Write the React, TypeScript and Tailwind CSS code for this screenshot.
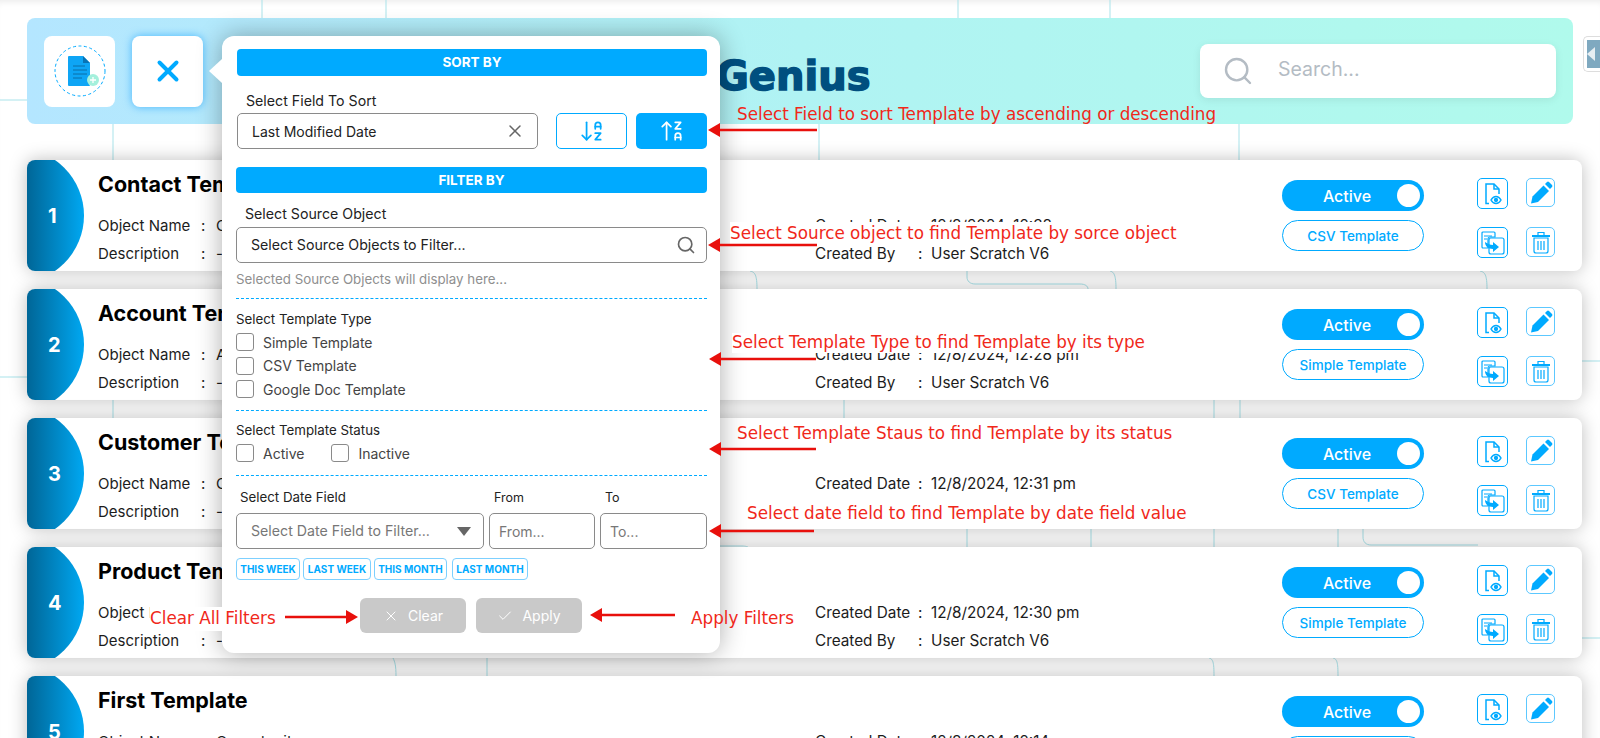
import { ArrowDownAZ, ArrowUpZA, Check, Search, X } from "lucide-react";

const rows = [
  { no: 1, title: "Contact Template", object: "Contact", date: "12/8/2024, 12:38 pm", type: "CSV Template" },
  { no: 2, title: "Account Template", object: "Account", date: "12/8/2024, 12:28 pm", type: "Simple Template" },
  { no: 3, title: "Customer Template", object: "Customer", date: "12/8/2024, 12:31 pm", type: "CSV Template" },
  { no: 4, title: "Product Template", object: "Product", date: "12/8/2024, 12:30 pm", type: "Simple Template" },
  { no: 5, title: "First Template", object: "Opportunity", date: "12/8/2024, 12:14 pm", type: "CSV Template" },
];

const BackgroundLines = () => (
  <svg className="absolute inset-0 h-full w-full" viewBox="0 0 1600 738" fill="none" stroke="#a9e3ea" strokeWidth="1">
    <path d="M262 0V18M386 0V18M958 0V18M1110 0V18" />
    <path d="M0 100H27M113 124V160M819 124V160M1239 124V160" />
    <path d="M750 271c5 1 7 4 7 18M967 271v6c0 4 3 7 8 7h105c5 0 8 2 8 5M1110 271c4 1 6 4 6 18M1480 271c5 1 7 4 7 18" />
    <path d="M0 377H27M1582 361H1600" />
    <path d="M113 400V418M844 400V418M1214 400V418M1240 400V418" />
    <path d="M720 546H742c4 0 6 1 6 1M967 529V547M1091 529V547M1214 529V547M1338 529V547M1363 529v8c0 5 3 8 8 8h107" />
    <path d="M1582 638H1600" />
    <path d="M393 658c2 4 3 8 3 18M487 658V676M1209 658c4 1 5 4 5 18M1333 658c4 1 5 4 5 18" />
  </svg>
);

const AddIcon = () => (
  <svg width="54" height="54" viewBox="0 0 54 54" fill="none">
    <circle cx="27" cy="27" r="25" stroke="#00aaff" strokeWidth="1" strokeDasharray="3 2.500" />
    <path d="M16 12h14l7 7v22a1 1 0 0 1-1 1H16a1 1 0 0 1-1-1V13a1 1 0 0 1 1-1z" fill="#0ea5f5" />
    <path d="M30 12l7 7h-7z" fill="#0873b4" />
    <path d="M20 22h12M20 26h14M20 30h14M20 34h9" stroke="#0b6ea8" strokeWidth="1" />
    <circle cx="40" cy="36" r="6" fill="#a4f0dc" />
    <path d="M40 33v6M37 36h6" stroke="#fff" strokeWidth="1.300" />
  </svg>
);

const ViewIcon = () => (
  <svg width="24" height="24" viewBox="0 0 24 24" fill="none" stroke="#00aaff" strokeWidth="1.500">
    <path d="M8 21.500H5V2h8l5 5v5" />
    <path d="M13 2v5h5" />
    <path d="M10 18c1.500-2.700 3-3.600 5-3.600s3.500 .9 5 3.600c-1.500 2.700-3 3.600-5 3.600s-3.500-.9-5-3.600z" />
    <circle cx="15" cy="18" r="1.400" fill="#00aaff" />
  </svg>
);

const EditIcon = () => (
  <svg width="24" height="24" viewBox="0 0 24 24" fill="#00aaff">
    <path d="M2 22.500l1.500-7L14.500 4.500l5.500 5.500L9 21z" />
    <path d="M16 3l2-2a1.500 1.500 0 0 1 2 0l3 3a1.500 1.500 0 0 1 0 2l-2 2z" />
  </svg>
);

const CopyIcon = () => (
  <svg width="26" height="26" viewBox="0 0 26 26" fill="none" stroke="#00aaff" strokeWidth="1.200">
    <path d="M3 2h11a1 1 0 0 1 1 1v4H10a2 2 0 0 0-2 2v9H3a1 1 0 0 1-1-1V3a1 1 0 0 1 1-1z" />
    <rect x="9" y="8" width="15" height="16" rx="2" />
    <path d="M4 6h8M4 9h3" />
    <path d="M5 12c0 4 3 7 8 7v3l6-5-6-5v3c-3 0-5-1-8-3z" fill="#00aaff" stroke="none" />
  </svg>
);

const TrashIcon = () => (
  <svg width="22" height="24" viewBox="0 0 22 24" fill="none" stroke="#00aaff" strokeWidth="1.200">
    <path d="M2 6h18" strokeWidth="2" />
    <path d="M8 5V2.500h6V5" />
    <path d="M4 8v13a2 2 0 0 0 2 2h10a2 2 0 0 0 2-2V8z" />
    <path d="M8 11v9M11 11v9M14 11v9" />
  </svg>
);

const Annotation = ({ text, className }: { text: string; className: string }) => (
  <span className={"absolute z-30 flex items-center whitespace-nowrap text-[#f0281a] text-[16.800px] font-['DejaVu_Sans',sans-serif] " + className}>
    {text}
  </span>
);

const Arrow = ({ x1, x2, y }: { x1: number; x2: number; y: number }) => {
  const dir = x2 > x1 ? -1 : 1;
  return (
    <g>
      <path d={`M${x1} ${y}H${x2 + dir * 8}`} stroke="#e8100c" strokeWidth="2.500" />
      <path d={`M${x2} ${y}l${dir * 12}-7v14z`} fill="#e8100c" />
    </g>
  );
};

const TemplateRow = ({ row }: { row: (typeof rows)[number] }) => (
  <div className="relative flex h-[111px] w-[1555px] shrink-0 rounded-lg bg-white shadow-[0_0_18px_rgba(0,0,0,0.26)]">
    <div className="flex h-full w-[57px] shrink-0 items-center rounded-l-lg bg-gradient-to-r from-[#006697] to-[#00a8f2] pl-[21px] text-[20px] font-bold text-white [clip-path:circle(67.6px_at_-10.6px_55.5px)]">
      {row.no}
    </div>
    <div className="ml-[14px] w-[717px] pt-[9px] text-[15px] text-[#1c1c1c]">
      <div className="text-[21.500px] leading-[30px] font-bold text-black">{row.title}</div>
      <div className="mt-[13px] flex h-[28px] items-center">
        <span className="w-[103px]">Object Name</span>
        <span className="w-[15px]">:</span>
        <span>{row.object}</span>
      </div>
      <div className="flex h-[28px] items-center">
        <span className="w-[103px]">Description</span>
        <span className="w-[15px]">:</span>
        <span>--</span>
      </div>
    </div>
    <div className="pt-[52px] text-[15.300px] text-[#1c1c1c]">
      <div className="flex h-[28px] items-center">
        <span className="w-[103px]">Created Date</span>
        <span className="w-[13px]">:</span>
        <span>{row.date}</span>
      </div>
      <div className="flex h-[28px] items-center">
        <span className="w-[103px]">Created By</span>
        <span className="w-[13px]">:</span>
        <span>User Scratch V6</span>
      </div>
    </div>
    <div className="absolute right-[158px] top-[20px] flex w-[142px] flex-col gap-[9px]">
      <div className="relative flex h-[31px] items-center justify-center rounded-full bg-[#00aaff] pr-[12px] text-[16px] font-medium text-white">
        Active
        <span className="absolute right-[4px] top-[4px] h-[23px] w-[23px] rounded-full bg-white" />
      </div>
      <div className="flex h-[31px] items-center justify-center rounded-full border border-[#00aaff] pt-[1px] text-[13.500px] font-medium text-[#00aaff]">
        {row.type}
      </div>
    </div>
    <div className="absolute right-[27px] top-[18px] grid grid-cols-[31px_29px] gap-x-[18px] gap-y-[18px]">
      <div className="flex h-[31px] w-[31px] items-center justify-center rounded-[5px] border border-[#00aaff]">
        <ViewIcon />
      </div>
      <div className="flex h-[29px] w-[29px] items-center justify-center rounded-[5px] border border-[#5cc8ff]">
        <EditIcon />
      </div>
      <div className="flex h-[31px] w-[31px] items-center justify-center rounded-[5px] border border-[#00aaff]">
        <CopyIcon />
      </div>
      <div className="flex h-[30px] w-[29px] items-center justify-center rounded-[5px] border border-[#5cc8ff]">
        <TrashIcon />
      </div>
    </div>
  </div>
);

const Checkbox = ({ label }: { label: string }) => (
  <label className="flex h-[18px] items-center gap-[9px] text-[14px] text-[#444]">
    <span className="h-[18px] w-[18px] rounded-[3px] border border-[#8a8a8a] bg-white" />
    {label}
  </label>
);

const FilterPopover = () => (
  <div className="absolute left-[222px] top-[36px] z-20 h-[617px] w-[498px] rounded-xl bg-white pl-[14px] pr-[13px] pt-[13px] text-[14.200px] text-[#222] shadow-[0_0_26px_rgba(0,0,0,0.32)]">
    <span className="absolute -left-[13px] top-[23px] h-0 w-0 border-y-[12px] border-r-[13px] border-y-transparent border-r-white" />
    <div className="ml-[1px] flex h-[27px] items-center justify-center rounded-[4px] bg-[#00aaff] text-[13.500px] font-bold text-white">
      SORT BY
    </div>
    <div className="ml-[10px] mt-[15px] leading-[20px]">Select Field To Sort</div>
    <div className="ml-[1px] mt-[2px] flex gap-[18px]">
      <div className="flex h-[36px] w-[301px] items-center justify-between rounded-[5px] border border-[#8a8a8a] pl-[14px] pr-[12px] text-[14px]">
        Last Modified Date
        <X size={20} color="#666" strokeWidth={1.8} />
      </div>
      <div className="flex h-[36px] w-[71px] items-center justify-center rounded-[5px] border border-[#00aaff]">
        <ArrowDownAZ size={26} color="#00aaff" strokeWidth={1.6} />
      </div>
      <div className="-ml-[9px] flex h-[36px] w-[71px] items-center justify-center rounded-[5px] bg-[#00aaff]">
        <ArrowUpZA size={26} color="#fff" strokeWidth={1.6} />
      </div>
    </div>
    <div className="mt-[18px] flex h-[26px] items-center justify-center rounded-[4px] bg-[#00aaff] text-[13.500px] font-bold text-white">
      FILTER BY
    </div>
    <div className="ml-[9px] mt-[11px] leading-[20px]">Select Source Object</div>
    <div className="mt-[3px] flex h-[36px] items-center justify-between rounded-[5px] border border-[#8a8a8a] pl-[14px] pr-[10px]">
      <span>Select Source Objects to Filter...</span>
      <Search size={20} color="#666" strokeWidth={2} />
    </div>
    <div className="mt-[7px] text-[13.300px] leading-[18px] text-[#8f8f8f]">Selected Source Objects will display here...</div>
    <div className="mt-[10px] border-t border-dashed border-[#00aaff]" />
    <div className="mt-[11px] text-[13.300px] leading-[18px]">Select Template Type</div>
    <div className="mt-[5px] flex flex-col gap-[5.500px]">
      <Checkbox label="Simple Template" />
      <Checkbox label="CSV Template" />
      <Checkbox label="Google Doc Template" />
    </div>
    <div className="mt-[12px] border-t border-dashed border-[#00aaff]" />
    <div className="mt-[10px] text-[13.300px] leading-[18px]">Select Template Status</div>
    <div className="mt-[5px] flex gap-[27px]">
      <Checkbox label="Active" />
      <Checkbox label="Inactive" />
    </div>
    <div className="mt-[13px] border-t border-dashed border-[#00aaff]" />
    <div className="mt-[13px] flex h-[18px] items-center text-[13.300px]">
      <span className="ml-[4px] w-[254px]">Select Date Field</span>
      <span className="w-[111px] text-[12.500px]">From</span>
      <span className="text-[12.500px]">To</span>
    </div>
    <div className="mt-[6px] flex gap-[5px] text-[#777]">
      <div className="flex h-[36px] w-[248px] items-center justify-between rounded-[5px] border border-[#8a8a8a] pl-[14px] pr-[12px]">
        <span>Select Date Field to Filter...</span>
        <span className="h-0 w-0 border-x-[7px] border-t-[9px] border-x-transparent border-t-[#666]" />
      </div>
      <div className="flex h-[36px] w-[106px] items-center rounded-[5px] border border-[#8a8a8a] pl-[9px] text-[14px]">From...</div>
      <div className="flex h-[36px] w-[107px] items-center rounded-[5px] border border-[#8a8a8a] pl-[9px] text-[14px]">To...</div>
    </div>
    <div className="mt-[9px] flex gap-[3px] text-[10px] font-bold text-[#00aaff]">
      <span className="flex h-[22px] w-[64px] items-center justify-center rounded-[4px] border border-[#7dd0ff]">THIS WEEK</span>
      <span className="flex h-[22px] w-[68px] items-center justify-center rounded-[4px] border border-[#7dd0ff]">LAST WEEK</span>
      <span className="flex h-[22px] w-[73px] items-center justify-center rounded-[4px] border border-[#7dd0ff]">THIS MONTH</span>
      <span className="ml-[2px] flex h-[22px] w-[76px] items-center justify-center rounded-[4px] border border-[#7dd0ff]">LAST MONTH</span>
    </div>
    <div className="ml-[124px] mt-[18px] flex gap-[10px] text-[14px] text-white">
      <div className="flex h-[35px] w-[106px] items-center justify-center gap-[9px] rounded-[6px] bg-[#c9c9c9]">
        <X size={16} strokeWidth={1.5} />
        Clear
      </div>
      <div className="flex h-[35px] w-[106px] items-center justify-center gap-[9px] rounded-[6px] bg-[#c9c9c9]">
        <Check size={16} strokeWidth={1.5} />
        Apply
      </div>
    </div>
  </div>
);

export default function App() {
  return (
    <div className="relative h-[738px] w-[1600px] overflow-hidden bg-white font-['Inter',sans-serif] shadow-[inset_0_6px_6px_-4px_rgba(0,0,0,0.08)]">
      <BackgroundLines />
      <div className="relative flex flex-col pl-[27px] pt-[18px]">
        <header className="flex h-[106px] w-[1546px] items-center rounded-lg bg-gradient-to-r from-[#b4e6ff] via-[#b0f3f3] to-[#b0faec] pl-[17px] pr-[17px]">
          <div className="flex h-[71px] w-[71px] items-center justify-center rounded-lg bg-white">
            <AddIcon />
          </div>
          <div className="ml-[17px] flex h-[71px] w-[71px] items-center justify-center rounded-lg bg-white shadow-[0_0_8px_rgba(0,150,255,0.6)]">
            <X size={34} color="#00aaff" strokeWidth={2.800} />
          </div>
          <div className="ml-[513px] mt-[9px] font-['DejaVu_Sans',sans-serif] text-[40px] font-bold leading-none text-[#004f7f] [-webkit-text-stroke:1.500px_#004f7f]">
            Genius
          </div>
          <div className="ml-auto flex h-[54px] w-[356px] items-center rounded-lg bg-white pl-[22px] text-[#b4bcc4] shadow-[0_2px_8px_rgba(0,0,0,0.08)]">
            <Search size={32} strokeWidth={1.800} />
            <span className="ml-[24px] -mt-[2px] text-[19.500px]">Search...</span>
          </div>
        </header>
        <div className="mt-[36px] flex flex-col gap-[18px]">
          {rows.map((row) => (
            <TemplateRow key={row.no} row={row} />
          ))}
        </div>
      </div>

      <div className="absolute right-0 top-[36px] h-[36px] w-[17px] rounded-l-[5px] border border-r-0 border-[#ddd] bg-white p-[3px] pr-0">
        <div className="flex h-full w-full items-center bg-[#7fa9c0]">
          <span className="h-0 w-0 border-y-[7px] border-r-[8px] border-y-transparent border-r-[#e6eef2]" />
        </div>
      </div>

      <FilterPopover />

      <Annotation text="Select Field to sort Template by ascending or descending" className="left-[737px] top-[104px] h-[22px]" />
      <Annotation text="Select Source object to find Template by sorce object" className="left-[730px] top-[222px] h-[24px] bg-white" />
      <Annotation text="Select Template Type to find Template by its type" className="left-[732px] top-[333px] h-[20px] bg-white" />
      <Annotation text="Select Template Staus to find Template by its status" className="left-[737px] top-[423px] h-[22px]" />
      <Annotation text="Select date field to find Template by date field value" className="left-[747px] top-[499px] h-[30px] bg-white" />
      <Annotation text="Clear All Filters" className="left-[150px] top-[607px] h-[24px] bg-white" />
      <Annotation text="Apply Filters" className="left-[691px] top-[607px] h-[24px]" />

      <svg className="absolute inset-0 z-40 h-full w-full" viewBox="0 0 1600 738" fill="none">
        <Arrow x1={817} x2={708} y={130} />
        <Arrow x1={817} x2={708} y={245} />
        <Arrow x1={816} x2={709} y={359} />
        <Arrow x1={816} x2={709} y={449} />
        <Arrow x1={814} x2={709} y={531} />
        <Arrow x1={285} x2={358} y={617} />
        <Arrow x1={675} x2={590} y={615} />
      </svg>
    </div>
  );
}
